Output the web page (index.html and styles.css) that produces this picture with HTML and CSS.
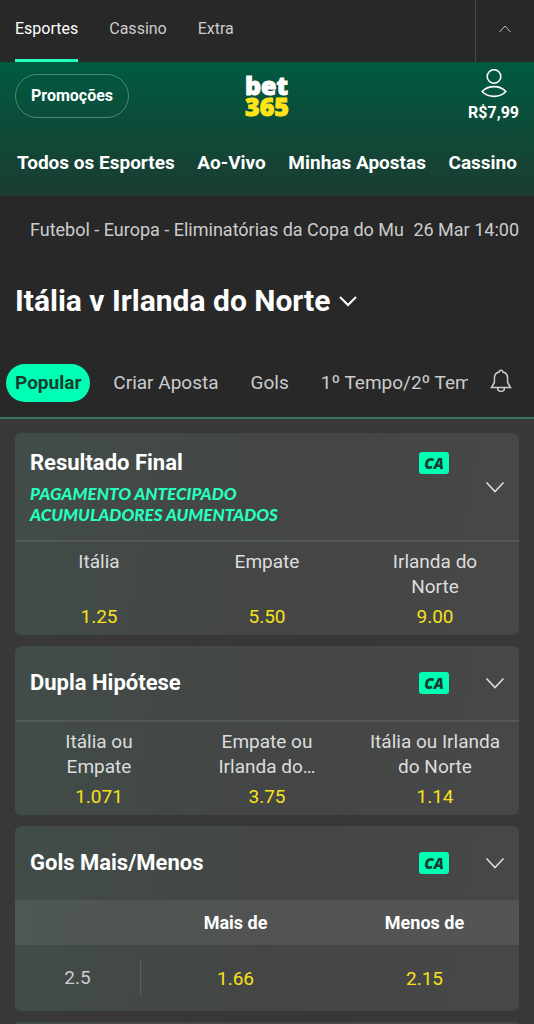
FILE: index.html
```html
<!DOCTYPE html>
<html lang="pt-BR">
<head>
<meta charset="utf-8">
<meta name="viewport" content="width=device-width, initial-scale=1">
<title>Itália v Irlanda do Norte</title>
<link rel="stylesheet" href="styles.css">
</head>
<body>
<nav class="product-bar" aria-label="Produtos">
  <div class="product-links">
    <a class="product-link is-active" href="#">Esportes</a>
    <a class="product-link" href="#">Cassino</a>
    <a class="product-link" href="#">Extra</a>
  </div>
  <button class="collapse" type="button" aria-label="Recolher">
    <svg width="14" height="10" viewBox="0 0 14 10"><path d="M1.500 8 7 2l5.500 6"/></svg>
  </button>
</nav>

<header class="header">
  <div class="header-top">
    <a class="promo" href="#">Promoções</a>
    <a class="logo" href="#"><span class="logo-bet">bet</span><span class="logo-365">365</span></a>
    <button class="account" type="button">
      <svg width="26" height="30" viewBox="0 0 26 30"><circle cx="13" cy="7.500" r="6.800"/><path d="M1.200 22.500C7 16 19 16 24.800 22.500 19 29 7 29 1.200 22.500Z"/></svg>
      <span>R$7,99</span>
    </button>
  </div>
  <nav class="main-nav" aria-label="Principal">
    <a href="#">Todos os Esportes</a>
    <a href="#">Ao-Vivo</a>
    <a href="#">Minhas Apostas</a>
    <a href="#">Cassino</a>
  </nav>
</header>

<section class="event">
  <div class="crumbs">
    <a class="crumb-path" href="#">Futebol - Europa - Eliminatórias da Copa do Mu</a>
    <time class="crumb-time">26 Mar 14:00</time>
  </div>
  <button class="event-title" type="button">
    <span>Itália v Irlanda do Norte</span>
    <svg width="18" height="12" viewBox="0 0 18 12"><path d="m1 2 8 8 8-8"/></svg>
  </button>
  <div class="tabs">
    <div class="tab-list">
      <button class="tab is-active" type="button">Popular</button>
      <button class="tab" type="button">Criar Aposta</button>
      <button class="tab" type="button">Gols</button>
      <button class="tab" type="button">1º Tempo/2º Tempo</button>
    </div>
    <button class="bell" type="button" aria-label="Notificações">
      <svg width="22" height="24" viewBox="0 0 22 24"><path d="M1.500 18.500H20.500L17.600 13.500V9.500C17.600 6 15.300 3.600 12.800 3.100 12.800.500 9.200.500 9.200 3.100 6.700 3.600 4.400 6 4.400 9.500V13.500ZM7.500 18.500C7.500 23.700 14.500 23.700 14.500 18.500"/></svg>
    </button>
  </div>
</section>

<main class="markets">
  <section class="market">
    <header class="market-head has-offers">
      <div class="market-info">
        <div class="market-line"><h2>Resultado Final</h2><span class="ca">CA</span></div>
        <div class="offers">
          <p>PAGAMENTO ANTECIPADO</p>
          <p>ACUMULADORES AUMENTADOS</p>
        </div>
      </div>
      <button class="toggle" type="button" aria-label="Recolher Resultado Final"><svg width="20" height="12" viewBox="0 0 20 12"><path d="m1.500 1.500 8.500 9 8.500-9"/></svg></button>
    </header>
    <div class="selections">
      <button class="selection" type="button"><span class="name">Itália</span><span class="odds">1.25</span></button>
      <button class="selection" type="button"><span class="name">Empate</span><span class="odds">5.50</span></button>
      <button class="selection" type="button"><span class="name">Irlanda do Norte</span><span class="odds">9.00</span></button>
    </div>
  </section>

  <section class="market">
    <header class="market-head">
      <div class="market-info">
        <div class="market-line"><h2>Dupla Hipótese</h2><span class="ca">CA</span></div>
      </div>
      <button class="toggle" type="button" aria-label="Recolher Dupla Hipótese"><svg width="20" height="12" viewBox="0 0 20 12"><path d="m1.500 1.500 8.500 9 8.500-9"/></svg></button>
    </header>
    <div class="selections">
      <button class="selection" type="button"><span class="name">Itália ou Empate</span><span class="odds">1.071</span></button>
      <button class="selection" type="button"><span class="name">Empate ou Irlanda do…</span><span class="odds">3.75</span></button>
      <button class="selection" type="button"><span class="name">Itália ou Irlanda do Norte</span><span class="odds">1.14</span></button>
    </div>
  </section>

  <section class="market">
    <header class="market-head">
      <div class="market-info">
        <div class="market-line"><h2>Gols Mais/Menos</h2><span class="ca">CA</span></div>
      </div>
      <button class="toggle" type="button" aria-label="Recolher Gols Mais/Menos"><svg width="20" height="12" viewBox="0 0 20 12"><path d="m1.500 1.500 8.500 9 8.500-9"/></svg></button>
    </header>
    <table class="totals">
      <thead><tr><td></td><th scope="col">Mais de</th><th scope="col">Menos de</th></tr></thead>
      <tbody><tr><th class="line" scope="row"><span>2.5</span></th><td><button class="odds" type="button">1.66</button></td><td><button class="odds" type="button">2.15</button></td></tr></tbody>
    </table>
  </section>

  <section class="market next-market"></section>
</main>
</body>
</html>
```
FILE: styles.css
```css
* { box-sizing: border-box; }

body {
  margin: 0;
  min-height: 100vh;
  display: flex;
  flex-direction: column;
  background: #383838;
  color: #fff;
  font-family: Roboto, "Liberation Sans", sans-serif;
}

a { color: inherit; text-decoration: none; }

button {
  margin: 0;
  padding: 0;
  border: 0;
  background: none;
  color: inherit;
  font: inherit;
}

svg { display: block; fill: none; stroke: currentColor; }

h2, p { margin: 0; }

.product-bar {
  display: flex;
  justify-content: space-between;
  height: 62px;
  background: #282828;
}

.product-links { display: flex; gap: 31px; padding-left: 15px; }

.product-link {
  padding-top: 19px;
  border-bottom: 3px solid transparent;
  color: #ccc;
  font-size: 16px;
  line-height: 20px;
}

.product-link.is-active { color: #fff; border-color: #26ffbe; }

.collapse {
  display: grid;
  place-items: center;
  width: 59px;
  padding-bottom: 4px;
  border-left: 1px solid #484848;
  color: #bbb;
}

.header {
  height: 134px;
  background: linear-gradient(#005a40, #1b3c32);
}

.header-top {
  display: grid;
  grid-template-columns: 1fr auto 1fr;
  align-items: center;
  height: 68px;
  padding: 0 15px;
}

.promo {
  justify-self: start;
  padding: 0 15px;
  border: 1px solid #4b8b79;
  border-radius: 22px;
  font-size: 16px;
  font-weight: 700;
  line-height: 42px;
}

.logo {
  display: grid;
  font-family: "Noto Sans", "Open Sans", sans-serif;
  font-size: 25px;
  font-weight: 900;
  line-height: 21px;
  -webkit-text-stroke: 1px;
}

.logo-365 { color: #ffe418; }

.account {
  justify-self: end;
  display: grid;
  justify-items: center;
  gap: 4px;
  font-size: 16px;
  font-weight: 700;
  line-height: 20px;
}

.account svg { stroke-width: 1.6; }

.main-nav {
  display: flex;
  justify-content: space-between;
  padding: 20px 17px;
  font-size: 19px;
  font-weight: 700;
  line-height: 26px;
  white-space: nowrap;
}

.event { background: #282828; border-bottom: 2px solid #3b7561; }

.crumbs {
  display: flex;
  justify-content: space-between;
  gap: 10px;
  padding: 21px 15px 0 30px;
  color: #ccc;
  font-size: 18px;
  line-height: 26px;
  white-space: nowrap;
}

.crumb-path { overflow: hidden; }

.event-title {
  display: flex;
  align-items: center;
  gap: 9px;
  padding: 40px 15px 0;
  font-size: 30px;
  font-weight: 700;
  line-height: 36px;
}

.event-title svg { stroke-width: 2; }

.tabs {
  display: flex;
  align-items: center;
  padding: 45px 22px 15px 6px;
  color: #ccc;
}

.tab-list {
  display: flex;
  flex: 1;
  min-width: 0;
  gap: 14px;
  overflow: hidden;
  white-space: nowrap;
}

.tab {
  flex: none;
  padding: 0 9px;
  border-radius: 20px;
  font-size: 19px;
  line-height: 38px;
}

.tab.is-active { background: #00ffb4; color: #173d31; font-weight: 700; }

.bell { margin-left: 22px; padding-bottom: 4px; }
.bell svg { stroke-width: 1.5; }

.markets {
  display: flex;
  flex: 1;
  flex-direction: column;
  gap: 11px;
  padding: 14px 15px 0;
}

.market {
  overflow: hidden;
  border-radius: 6px;
  background: linear-gradient(100deg, #414c48, #444645 50%, #474747);
}

.next-market { flex: 1; min-height: 1px; border-radius: 6px 6px 0 0; }

.market-head {
  display: flex;
  align-items: center;
  min-height: 74px;
  padding: 0 14px 0 15px;
}

.has-offers { min-height: 107px; }

.market-info { flex: 1; }

.market-line { display: flex; align-items: center; justify-content: space-between; }

.market-line h2 { font-size: 22px; font-weight: 700; line-height: 28px; }

.ca {
  width: 30px;
  border-radius: 3px;
  background: #00ffb4;
  color: #173d31;
  font: italic 800 15px/22px "Open Sans", sans-serif;
  text-align: center;
}

.offers {
  padding-top: 6px;
  color: #26ffbe;
  font: italic 900 17px/21px Lato, sans-serif;
}

.toggle { margin-left: 36px; color: #ddd; }
.toggle svg { stroke-width: 1.6; }

.selections {
  display: grid;
  grid-template-columns: repeat(3, 1fr);
  border-top: 2px solid #535856;
}

.selection {
  display: flex;
  flex-direction: column;
  align-items: center;
  padding: 7px 17px 6px;
  font-size: 19px;
  line-height: 25px;
}

.name { min-height: 50px; color: #ddd; }
.odds { color: #f8e11c; font-size: 19px; }
.selection .odds { padding-top: 5px; }

.totals { width: 100%; border-collapse: collapse; table-layout: fixed; text-align: center; }
.totals td:first-child { width: 25%; }
.totals thead { background: rgba(255, 255, 255, 0.07); }
.totals thead th { height: 45px; padding: 0; font-size: 18px; font-weight: 700; }
.totals tbody td { height: 66px; padding: 0; }

.line { padding: 0; color: #ccc; font-size: 19px; font-weight: 400; }
.line span { display: block; border-right: 1px solid #5b5f5d; line-height: 36px; }
```
